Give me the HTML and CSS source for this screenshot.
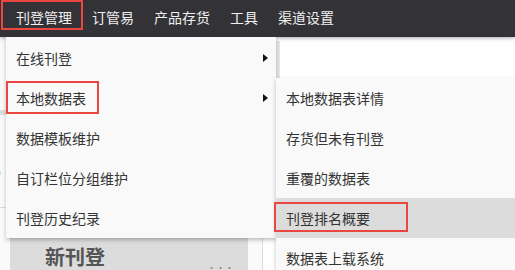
FILE: index.html
```html
<html lang="zh-CN">
<head>
    <meta charset="UTF-8">
    <title>刊登管理</title>
    <link rel="stylesheet" href="styles.css">
</head>
<body>
    <header class="topbar">
        <ul class="nav">
            <li class="nav-item">
                <span class="nav-label">刊登管理</span>
                <span class="mark mark-nav"></span>
                <ul class="menu">
                    <li class="menu-item has-sub">在线刊登</li>
                    <li class="menu-item has-sub">
                        本地数据表
                        <span class="mark mark-menu"></span>
                        <ul class="menu submenu">
                            <li class="menu-item">本地数据表详情</li>
                            <li class="menu-item">存货但未有刊登</li>
                            <li class="menu-item">重覆的数据表</li>
                            <li class="menu-item hover">
                                刊登排名概要
                                <span class="mark mark-sub"></span>
                            </li>
                            <li class="menu-item">数据表上载系统</li>
                        </ul>
                    </li>
                    <li class="menu-item">数据模板维护</li>
                    <li class="menu-item">自订栏位分组维护</li>
                    <li class="menu-item">刊登历史纪录</li>
                </ul>
            </li>
            <li class="nav-item"><span class="nav-label">订管易</span></li>
            <li class="nav-item"><span class="nav-label">产品存货</span></li>
            <li class="nav-item"><span class="nav-label">工具</span></li>
            <li class="nav-item"><span class="nav-label">渠道设置</span></li>
        </ul>
    </header>

    <main class="page">
        <section class="left-col">
            <div class="summary">
                <span class="summary-num">5</span>
            </div>
            <div class="card">
                <h3 class="card-title">新刊登</h3>
                <span class="card-more">···</span>
            </div>
        </section>
        <section class="right-col">
            <div class="search-box"></div>
            <table class="list">
                <tr><td>&nbsp;</td></tr>
            </table>
        </section>
    </main>
</body>
</html>
```

FILE: styles.css
```css
body {
    margin: 0;
    padding: 0;
    background: #fafafa;
    font-family: "Noto Sans CJK SC", "Liberation Sans", sans-serif;
    font-size: 14px;
    color: #333;
    overflow: hidden;
}

ul {
    list-style: none;
    margin: 0;
    padding: 0;
}

.topbar {
    position: relative;
    z-index: 10;
    height: 37px;
    background: #333337;
    box-shadow: 0 1px 4px rgba(0, 0, 0, 0.35);
}

.nav {
    display: flex;
    padding-left: 6px;
}

.nav-item {
    position: relative;
    height: 37px;
    padding: 0 10px;
}

.nav-label {
    display: block;
    line-height: 34px;
    color: #f0f0f0;
    white-space: nowrap;
}

.menu {
    position: absolute;
    top: 37px;
    left: 0;
    width: 270px;
    padding-top: 1px;
    background: #f9f9f9;
    box-shadow: 0 2px 4px rgba(0, 0, 0, 0.25);
}

.menu-item {
    position: relative;
    height: 40px;
    line-height: 40px;
    padding-left: 10px;
    color: #333;
    white-space: nowrap;
}

.has-sub::after {
    content: "";
    position: absolute;
    right: 8px;
    top: 16px;
    border-left: 5px solid #111;
    border-top: 4px solid transparent;
    border-bottom: 4px solid transparent;
}

.submenu {
    top: 0;
    left: 100%;
    width: 260px;
    padding-top: 0;
}

.menu-item.hover {
    background: #dcdcdc;
}

.mark {
    position: absolute;
    box-sizing: border-box;
    border: 2px solid #e9473f;
}

.mark-nav {
    left: -5px;
    top: 0;
    width: 82px;
    height: 30px;
}

.mark-menu {
    left: 0;
    top: 3px;
    width: 93px;
    height: 33px;
}

.mark-sub {
    left: -2px;
    top: 4px;
    width: 134px;
    height: 30px;
}

.page {
    display: grid;
    grid-template-columns: 262px 1fr;
}

.left-col {
    overflow: hidden;
}

.summary {
    margin-top: 73px;
    height: 92px;
    border-top: 5px solid #dedede;
    border-bottom: 1px solid #dcdcdc;
}

.summary-num {
    display: block;
    margin-top: 40px;
    margin-left: -13px;
    font-size: 26px;
    line-height: 26px;
    color: #3d4b63;
}

.card {
    position: relative;
    margin: 30px 14px 0 10px;
    height: 32px;
    background: #dcdcdc;
}

.card-title {
    margin: 0;
    padding: 6px 0 0 35px;
    font-size: 20px;
    line-height: 26px;
    font-weight: bold;
    color: #555;
}

.card-more {
    position: absolute;
    right: 14px;
    bottom: -2px;
    font-size: 9px;
    line-height: 9px;
    color: #888;
}

.right-col {
    border-left: 1px solid #dcdcdc;
    background: #fff;
}

.search-box {
    margin: 4px 0 0 13px;
    height: 37px;
    background: #fff;
    border-left: 4px solid #e6e6e6;
}

.list {
    width: 100%;
    margin-top: 160px;
    border-collapse: collapse;
}
```
